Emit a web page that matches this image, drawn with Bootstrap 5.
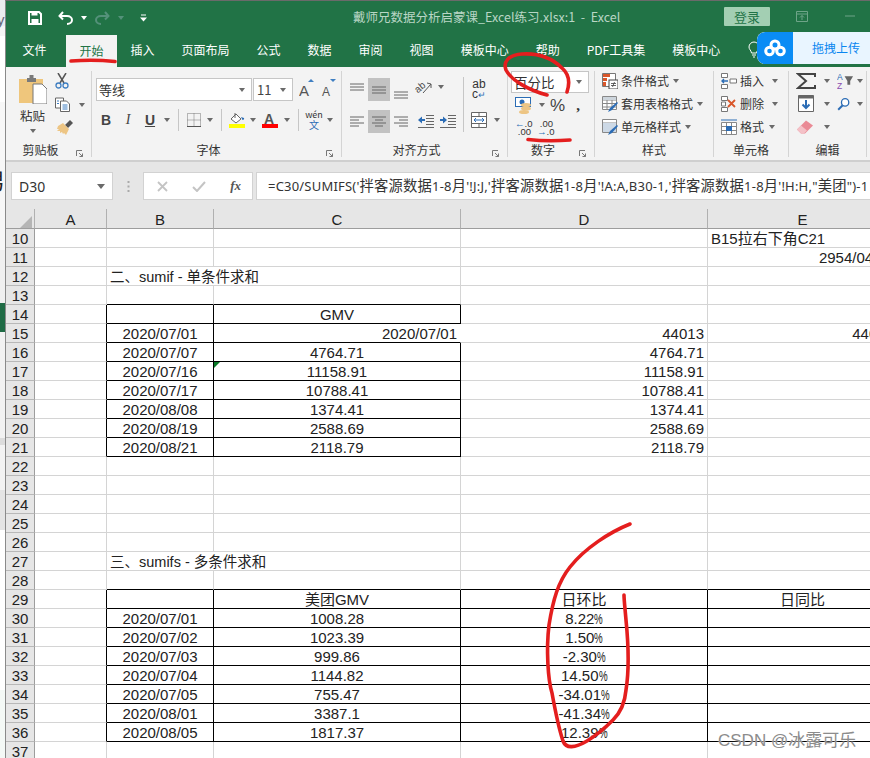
<!DOCTYPE html>
<html lang="zh-CN">
<head>
<meta charset="utf-8">
<title>Excel</title>
<link href="https://cdn.jsdelivr.net/npm/bootstrap@5.3.0/dist/css/bootstrap.min.css" rel="stylesheet">
<style>
html,body{margin:0;width:870px;height:758px;overflow:hidden;background:#fff}
body{font-family:"Noto Sans CJK SC","Noto Sans",sans-serif;font-size:12px;color:#333;position:relative}
.side-strip{width:5px;flex:none;overflow:hidden;background:linear-gradient(#eaecef 0 26px,#f5f5f5 26px 36px,#fff 36px 102px,#f7f7f7 102px 250px,#f0f0f0 250px 303px,#1f6b45 303px 332px,#f2f2f2 332px 438px,#dcdcdc 438px 445px,#f3f3f3 445px 490px,#e4e4e4 490px 530px,#fff 530px 690px,#f4f9f6 690px)}
.side-glyph{display:block;font:15px/16px "Liberation Sans",sans-serif;color:#667;margin:12px 0 0 -3px}
.side-glyph2{display:block;font:22px/30px "Noto Sans CJK SC",sans-serif;color:#222;margin:136px 0 0 -17px}
.xl-win{width:865px;flex:none;border-left:1px solid #8a8a8a;border-top:1px solid #6a6a6a;overflow:hidden}
.title-row{height:33px;background:#217346;color:#b9d6c5}
.qat{width:347px;padding-left:22px}
.win-title{width:371px;font-size:12.5px;white-space:pre}
.login-btn{width:46px;height:19px;background:#a3cfb3;color:#217346;font-size:13px;line-height:19px;border-radius:1px;margin-bottom:3px}
.win-ctl{margin-left:26px;margin-bottom:3px}
.win-ctl2{margin-left:37px;margin-bottom:3px}
.tab-row{height:33px;background:#217346;padding-left:3px}
.tab-row .nav-link{padding:0 13.5px;color:#fff;font-size:12px;line-height:32px;height:33px;border-radius:0}
.tab-row .nav-link.active{background:#f3f3f3;color:#217346;margin-top:1px;margin-left:6px;line-height:31px;height:32px}
.bulb{margin-left:14px;margin-top:7px}
.rib{height:93px;background:#f3f3f3;padding:4px 0 3px}
.rg{flex:none;height:86px;display:flex;flex-direction:column;border-right:1px solid #d4d4d4}
.rg1{width:86px}.rg2{width:250px}.rg3{width:166px}.rg4{width:87px}.rg5{width:119px}.rg6{width:75px}.rg7{width:78px}
.rg-body{flex:1 1 auto;min-height:0}
.rg-foot{height:14px;display:flex;flex:none;color:#333;line-height:14px}
.rg-foot>span:first-child{flex:1;text-align:center}
.launch{width:16px;display:flex;align-items:end;justify-content:start;padding-left:1px}
.ic{display:inline-flex;align-items:center;justify-content:center;flex:none}
.w12{width:12px}.w14{width:14px}.w20{width:20px}.w22{width:22px}.w23{width:23px}.w16{width:16px}
.tri{display:inline-block;width:0;height:0;border-left:3.5px solid transparent;border-right:3.5px solid transparent;border-top:4px solid #6a6a6a}
.vsep{width:1px;background:#c6c6c6;flex:none}
.paste-col{width:28px;margin-left:13px;padding-top:4px;text-align:center}
.paste-lab{display:block;font-size:12.5px;line-height:18px;margin:3px -4px 0 -5px}
.small-col{margin-left:8px;padding-top:2px}
.font-box{height:23px;background:#fff;border:1px solid #c6c6c6;display:flex;align-items:center;justify-content:space-between}
.fb-name{width:156px;padding:0 6px 0 2px;font-size:13px}
.fb-size{width:40px;margin-left:1px;padding:0 6px 0 3px;font-size:13px;color:#444}
.f-top{padding:7px 0 0 4px;height:35px}
.f-bot{padding:0 0 0 3px;height:28px}
.bi{font:bold 14px/1 "Liberation Sans",sans-serif;color:#444}
.it{font:italic 14px/1 "Liberation Serif",serif;color:#444}
.un{font:bold 14px/1 "Liberation Sans",sans-serif;color:#444;text-decoration:underline}
.sep-5{height:22px;margin:0 5px}
.wen{font-size:9px;line-height:10px;text-align:center;color:#333}
.wen b{display:block;font-weight:400;color:#2b6cb5;font-size:10px}
.on-gray{background:#c2c2c2;height:23px}
.al-left{width:121px;padding:7px 0 0 4px}
.al-r1{height:24px}
.al-r2{height:24px;margin-top:7px}
.al-sep{height:55px;margin:6px 0 0 0}
.al-right{padding:8px 0 0 7px}
.wrap-ic{width:16px;height:20px;font:12px/10px "Liberation Sans",sans-serif;color:#333;text-align:center;padding-top:0}
.num-sel{margin-left:3px;width:78px;height:22px;background:#fff;border:1px solid #c6c6c6;font-size:13.5px;padding:0 6px 0 2px}
.num-r{padding:2px 0 0 7px;height:22px}
.pct{font:17px/1 "Liberation Sans",sans-serif;color:#444}
.cma{font:bold 15px/1 "Liberation Serif",serif;color:#333}
.dec{font:9.5px/7.500px "Liberation Sans",sans-serif;color:#333;text-align:right;width:16px}
.dec i{font-style:normal;color:#2b6cb5;font-weight:700}
.rows-up{margin-top:-2px}
.sty-r{height:23px;padding-left:7px}
.sty-r svg{margin-right:3px;flex:none}
.sty-r .tri{margin-left:4px}
.sty-lab{line-height:23px;font-size:12px;white-space:nowrap}
.cell-r{padding-left:7px;height:23px}
.cell-r svg{margin-right:3px;flex:none}
.cell-r .tri{margin-left:5px}
.ed-a{width:27px;padding-left:6px}
.fbar{height:49px;background:#e6e6e6;border-top:2px solid #cfcfcf;padding-top:10px}
.nm-box{width:102px;height:28px;margin-left:5px;background:#fff;border:1px solid #d2d2d2;padding:0 7px;font:14px "Noto Sans",sans-serif;color:#333}
.dots{width:30px;height:28px;color:#aaa}
.fx-box{width:110px;height:28px;background:#fff;border:1px solid #d2d2d2;padding:0 11px 0 13px}
.fx-t{font:italic bold 13px "Liberation Serif",serif;color:#555}
.fm-box{flex:1 1 auto;height:28px;margin-left:3px;background:#fff;border:1px solid #d2d2d2;border-right:0;line-height:26px;padding-left:11px;font-family:"Noto Sans","Noto Sans CJK SC",sans-serif;font-size:13px;letter-spacing:.2px;white-space:nowrap;overflow:hidden;color:#333}
.fm-cj{font-size:14.300px}
.sheet-wrap{overflow:hidden;width:864px;height:549px}
table.sheet{table-layout:fixed;width:892px;border-collapse:separate;border-spacing:0;margin:0;font:15px/16px "Liberation Sans","Noto Sans CJK SC",sans-serif;color:#222}
.sheet td,.sheet th{height:19px;padding:2px 3px 0;border:0;border-right:1px solid #d4d4d4;border-bottom:1px solid #d4d4d4;white-space:nowrap;overflow:hidden;font-weight:400;background:#fff;box-shadow:none;vertical-align:bottom;color:#222}
.sheet thead th{height:20px;background:#e6e6e6;border-right:1px solid #b0b0b0;border-bottom:1px solid #9d9d9d;text-align:center;padding:2px 0 0}
.sheet tbody th{background:#e6e6e6;border-right:1px solid #9d9d9d;border-bottom:1px solid #b8b8b8;text-align:center;padding:2px 0 0}
.sheet td.ink{border-right-color:#000;border-bottom-color:#000}
.sheet td.ink-b{border-bottom-color:#000}
.sheet td.ink-r{border-right-color:#000}
.sheet td.no-r{border-right-color:#fff}
.sheet td.flagged{position:relative}
.sheet td.sec-title{font-size:14.500px}
.pc{display:inline-block;width:8.500px;transform:scaleX(.65);transform-origin:left center}
.err-mark{position:absolute;left:0;top:0;width:0;height:0;border-top:6px solid #0a7a28;border-right:6px solid transparent}
.baidu{position:absolute;left:757px;top:32px;width:113px;height:32px;background:#e9f5ff;border-radius:8px 0 0 8px;overflow:hidden;color:#0a86f0;font-size:12px}
.baidu-ic{width:36px;height:32px;background:#0a8cf5;border-radius:8px 0 0 8px;margin-right:19px}
.ink-layer{position:absolute;left:0;top:0;pointer-events:none}
.csdn{position:absolute;left:718px;top:730px;font:17px/22px "Liberation Sans","Noto Sans CJK SC",sans-serif;color:#8c8c8c;text-shadow:0 0 2px #fff;white-space:nowrap}
</style>
</head>
<body>
<div class="d-flex">
<div class="side-strip"><span class="side-glyph">y</span><span class="side-glyph2">男</span></div>
<div class="xl-win">

<div class="title-row d-flex align-items-center">
  <div class="qat d-flex align-items-center">
    <svg width="14" height="14" viewBox="0 0 14 14"><path d="M1 1h10l2 2v10H1z" fill="none" stroke="#fff" stroke-width="2"/><rect x="3.5" y="1" width="6" height="3.5" fill="#fff"/><rect x="3.5" y="8" width="7" height="5" fill="#fff"/></svg>
    <svg class="ms-3" width="15" height="14" viewBox="0 0 15 14"><path d="M5 1 1.500 5 5 8.500M2 5h7c3 0 5 1.800 5 4s-2 4-5 4" fill="none" stroke="#fff" stroke-width="2"/></svg>
    <span class="tri ms-2" style="border-top-color:#fff"></span>
    <svg class="ms-2" width="15" height="14" viewBox="0 0 15 14"><path d="M10 1l3.500 4L10 8.500M13 5H6c-3 0-5 1.800-5 4s2 4 5 4" fill="none" stroke="#54917a" stroke-width="2"/></svg>
    <span class="tri ms-2" style="border-top-color:#54917a"></span>
    <svg class="ms-3" width="7" height="8" viewBox="0 0 7 8"><path d="M1 1h5" stroke="#fff"/><path d="M0 3.500h7L3.500 7.500z" fill="#fff"/></svg>
  </div>
  <div class="win-title">戴师兄数据分析启蒙课_Excel练习.xlsx:1  -  Excel</div>
  <div class="login-btn text-center">登录</div>
  <svg class="win-ctl" width="12" height="11" viewBox="0 0 12 11"><path d="M.5.500h11v10H.500zM.5 3h11M4 6.500l2-2 2 2M6 4.500V9" fill="none" stroke="#6ea488"/></svg>
  <svg class="win-ctl2" width="10" height="2" viewBox="0 0 10 2"><path d="M0 1h10" stroke="#6ea488"/></svg>
</div>

<div class="tab-row d-flex">
  <ul class="nav flex-nowrap">
    <li class="nav-item"><a class="nav-link" href="#">文件</a></li>
    <li class="nav-item"><a class="nav-link active" href="#">开始</a></li>
    <li class="nav-item"><a class="nav-link" href="#">插入</a></li>
    <li class="nav-item"><a class="nav-link" href="#">页面布局</a></li>
    <li class="nav-item"><a class="nav-link" href="#">公式</a></li>
    <li class="nav-item"><a class="nav-link" href="#">数据</a></li>
    <li class="nav-item"><a class="nav-link" href="#">审阅</a></li>
    <li class="nav-item"><a class="nav-link" href="#">视图</a></li>
    <li class="nav-item"><a class="nav-link" href="#">模板中心</a></li>
    <li class="nav-item"><a class="nav-link" href="#">帮助</a></li>
    <li class="nav-item"><a class="nav-link" href="#">PDF工具集</a></li>
    <li class="nav-item"><a class="nav-link" href="#">模板中心</a></li>
  </ul>
  <svg class="bulb" width="12" height="17" viewBox="0 0 12 17"><path d="M3.500 12C3 9 1 8.500 1 6a5 5 0 0 1 10 0c0 2.500-2 3-2.500 6zM4 14h4M5 16h2" fill="none" stroke="#fff"/></svg>
</div>

<div class="rib d-flex">
  <!-- clipboard -->
  <div class="rg rg1">
    <div class="rg-body d-flex">
      <div class="paste-col">
        <svg class="d-block" width="28" height="29" viewBox="0 0 28 29"><path d="M0 4h24v24H0z" fill="#efc67c"/><path d="M8 3h2.500V0h4v3H17v4H8z" fill="#7a7a7a"/><path d="M14 9h9l5 5v15H14z" fill="#fff" stroke="#777"/></svg>
        <span class="paste-lab">粘贴</span>
        <span class="tri d-block mx-auto mt-1"></span>
      </div>
      <div class="small-col">
        <svg class="d-block" width="14" height="16" viewBox="0 0 14 16"><path d="M3 0l6 10M11 0 5 10" stroke="#555" stroke-width="1.500"/><circle cx="3.500" cy="12.500" r="2.500" fill="none" stroke="#3f7fc2" stroke-width="1.300"/><circle cx="10.500" cy="12.500" r="2.500" fill="none" stroke="#3f7fc2" stroke-width="1.300"/></svg>
        <div class="d-flex align-items-center" style="margin-top:8px">
          <svg width="16" height="15" viewBox="0 0 16 15"><path d="M.5 1h8v10h-8z" fill="#fff" stroke="#666"/><path d="M5.500 4h6l3 3v7.500h-9z" fill="#fff" stroke="#666"/><path d="M2 4h2M2 6.500h2M7.500 8h5M7.500 10h5M7.500 12h5" stroke="#3f7fc2"/></svg>
          <span class="tri ms-2"></span>
        </div>
        <svg class="d-block" style="margin-top:8px" width="18" height="15" viewBox="0 0 18 15"><path d="M10 5l5-5 3 3-5 5z" fill="#555"/><path d="M3 6l5-3 6 6-3 6-2-2-1 1-1-2-2 1 0-2-3 0 2-2-2 0z" fill="#edc584"/></svg>
      </div>
    </div>
    <div class="rg-foot"><span>剪贴板</span><span class="launch"><svg width="7" height="7" viewBox="0 0 7 7"><path d="M.5 6V.500H6M3 3l3.500 3.500M6.500 3.500v3h-3" fill="none" stroke="#777"/></svg></span></div>
  </div>

  <!-- font -->
  <div class="rg rg2">
    <div class="rg-body">
      <div class="f-top d-flex">
        <div class="font-box fb-name"><span>等线</span><span class="tri"></span></div>
        <div class="font-box fb-size"><span>11</span><span class="tri"></span></div>
        <svg style="margin-left:6px" width="15" height="20" viewBox="0 0 15 20"><text x="0" y="18" font-family="Liberation Sans" font-size="15" fill="#555">A</text><path d="M9 4l3-3 3 3z" fill="#3f7fc2"/></svg>
        <svg style="margin-left:7px" width="15" height="20" viewBox="0 0 15 20"><text x="1" y="18" font-family="Liberation Sans" font-size="12" fill="#555">A</text><path d="M9 1h6l-3 3z" fill="#3f7fc2"/></svg>
      </div>
      <div class="f-bot d-flex align-items-center">
        <span class="ic w22 bi">B</span><span class="ic w22 it">I</span><span class="ic w22 un">U</span><span class="ic w12"><span class="tri"></span></span>
        <span class="vsep sep-5"></span>
        <span class="ic w20"><svg width="14" height="14" viewBox="0 0 14 14"><path d="M.5.500h13v13H.500zM7 .5v13M.5 7h13" fill="none" stroke="#777" stroke-dasharray="1 1"/><path d="M0 13.500h14" stroke="#555"/></svg></span><span class="ic w12"><span class="tri"></span></span>
        <span class="vsep sep-5"></span>
        <span class="ic w20"><svg width="16" height="16" viewBox="0 0 16 16"><path d="M2 7l5-5 5 5-5 4z" fill="#fff" stroke="#666"/><path d="M6 1v5" stroke="#666"/><path d="M12 5l3 1c.5 1-.5 2-1.500 2z" fill="#2b6cb5"/><rect y="12" width="16" height="4" fill="#ffff00"/></svg></span><span class="ic w12"><span class="tri"></span></span>
        <span class="ic w22"><svg width="16" height="16" viewBox="0 0 16 16"><text x="2" y="12" font-family="Liberation Sans" font-weight="700" font-size="14" fill="#555">A</text><rect y="12" width="16" height="4" fill="#f00"/></svg></span><span class="ic w12"><span class="tri"></span></span>
        <span class="vsep sep-5"></span>
        <span class="ic w20 wen"><span>wén<b>文</b></span></span><span class="ic w12"><span class="tri"></span></span>
      </div>
    </div>
    <div class="rg-foot"><span>字体</span><span class="launch"><svg width="7" height="7" viewBox="0 0 7 7"><path d="M.5 6V.500H6M3 3l3.500 3.500M6.500 3.500v3h-3" fill="none" stroke="#777"/></svg></span></div>
  </div>

  <!-- alignment -->
  <div class="rg rg3">
    <div class="rg-body d-flex">
      <div class="al-left">
        <div class="al-r1 d-flex align-items-start">
          <span class="ic w22" style="height:17px"><svg width="14" height="8" viewBox="0 0 14 8"><path d="M0 1h14M0 4h14M0 7h14" stroke="#666" /></svg></span>
          <span class="ic w22 on-gray"><svg width="14" height="8" viewBox="0 0 14 8"><path d="M0 1h14M0 4h14M0 7h14" stroke="#666"/></svg></span>
          <span class="ic w22 on-gray" style="background:none;align-items:end;padding-bottom:2px"><svg width="14" height="8" viewBox="0 0 14 8"><path d="M0 1h14M0 4h14M0 7h14" stroke="#666"/></svg></span>
          <span class="ic w23"><svg width="18" height="17" viewBox="0 0 18 17"><text x="0" y="12" font-family="Liberation Sans" font-size="10" fill="#444" transform="rotate(-40 6 10)">ab</text><path d="M8 15 16 6M12 5l4 1 0 4" fill="none" stroke="#555"/></svg></span>
          <span class="ic w12" style="height:17px"><span class="tri"></span></span>
        </div>
        <div class="al-r2 d-flex align-items-center">
          <span class="ic w22"><svg width="14" height="11" viewBox="0 0 14 11"><path d="M0 1h14M0 4h9M0 7h14M0 10h9" stroke="#666"/></svg></span>
          <span class="ic w22 on-gray"><svg width="14" height="11" viewBox="0 0 14 11"><path d="M0 1h14M3 4h8M0 7h14M3 10h8" stroke="#666"/></svg></span>
          <span class="ic w22"><svg width="14" height="11" viewBox="0 0 14 11"><path d="M0 1h14M5 4h9M0 7h14M5 10h9" stroke="#666"/></svg></span>
          <span class="ic w22" style="margin-left:3px"><svg width="16" height="13" viewBox="0 0 16 13"><path d="M8 .5h8M8 3.500h8M8 6.500h8M8 9.500h8M0 12.500h16" stroke="#666"/><path d="M0 5l4-3.500V4h3v2H4v2.500z" fill="#2b6cb5"/></svg></span>
          <span class="ic w22"><svg width="16" height="13" viewBox="0 0 16 13"><path d="M8 .5h8M8 3.500h8M8 6.500h8M8 9.500h8M0 12.500h16" stroke="#666"/><path d="M7 5 3 1.500V4H0v2h3v2.500z" fill="#2b6cb5"/></svg></span>
        </div>
      </div>
      <span class="vsep al-sep"></span>
      <div class="al-right">
        <div class="wrap-ic">ab<br>c<span style="color:#2b6cb5;font-size:9px">↵</span></div>
        <div class="d-flex align-items-center" style="margin-top:13px">
          <svg width="16" height="16" viewBox="0 0 16 16"><path d="M.5.500h15v15H.500zM.5 4.500h15M.5 11.500h15M8 .5v4M8 11.500v4" fill="#fff" stroke="#666"/><path d="M3 8h10M5 6 3 8l2 2M11 6l2 2-2 2" fill="none" stroke="#2b6cb5"/></svg>
          <span class="ic w12 ms-1"><span class="tri"></span></span>
        </div>
      </div>
    </div>
    <div class="rg-foot"><span>对齐方式</span><span class="launch"><svg width="7" height="7" viewBox="0 0 7 7"><path d="M.5 6V.500H6M3 3l3.500 3.500M6.500 3.500v3h-3" fill="none" stroke="#777"/></svg></span></div>
  </div>

  <!-- number -->
  <div class="rg rg4">
    <div class="rg-body">
      <div class="num-sel d-flex align-items-center justify-content-between"><span>百分比</span><span class="tri"></span></div>
      <div class="num-r d-flex align-items-center">
        <svg width="17" height="17" viewBox="0 0 17 17"><rect x=".5" y=".5" width="15" height="9" fill="#fff" stroke="#2b6cb5"/><circle cx="7" cy="5" r="2.500" fill="#2b6cb5"/><ellipse cx="11" cy="8" rx="5" ry="2" fill="#edc584"/><ellipse cx="11" cy="11.500" rx="5" ry="2" fill="#edc584"/><ellipse cx="9" cy="15" rx="5" ry="2" fill="#edc584"/></svg>
        <span class="ic w12 ms-1"><span class="tri"></span></span>
        <span class="pct" style="margin-left:2px">%</span>
        <span class="cma" style="margin-left:11px">,</span>
      </div>
      <div class="d-flex" style="padding:5px 0 0 7px">
        <span class="dec"><i>←</i>.0<br>.00</span>
        <span class="dec" style="margin-left:6px">.00<br><i>→</i>.0</span>
      </div>
    </div>
    <div class="rg-foot"><span>数字</span><span class="launch"><svg width="7" height="7" viewBox="0 0 7 7"><path d="M.5 6V.500H6M3 3l3.500 3.500M6.500 3.500v3h-3" fill="none" stroke="#777"/></svg></span></div>
  </div>

  <!-- styles -->
  <div class="rg rg5">
    <div class="rg-body rows-up">
      <div class="sty-r d-flex align-items-center">
        <svg width="16" height="16" viewBox="0 0 16 16"><path d="M.5.500h13v13H.500z" fill="#fff" stroke="#777"/><path d="M1 1h7v3H1zM1 5h4v3H1zM1 9h3v4H1z" fill="#d9572b"/><rect x="7" y="7" width="9" height="9" fill="#fff" stroke="#444"/><path d="M9 10.500h5M9 12.500h5M12.500 9l-2 5" stroke="#444" stroke-width=".8"/></svg>
        <span class="sty-lab">条件格式</span><span class="tri"></span>
      </div>
      <div class="sty-r d-flex align-items-center">
        <svg width="16" height="16" viewBox="0 0 16 16"><path d="M.5.500h14v13H.500zM.5 4h14M.5 7.500h14M.5 11h14M5 .5v13M10 .5v13" fill="#fff" stroke="#888"/><path d="M1 1h13v3H1z" fill="#cdd5dc"/><path d="M6 16l2-4 7-6 1 1-6 7z" fill="#2b6cb5"/></svg>
        <span class="sty-lab">套用表格格式</span><span class="tri"></span>
      </div>
      <div class="sty-r d-flex align-items-center">
        <svg width="16" height="16" viewBox="0 0 16 16"><path d="M.5.500h14v13H.500zM.5 4h14" fill="#fff" stroke="#888"/><path d="M1 4h13v9H1z" fill="#cdd9e6"/><path d="M6 16l2-4 7-6 1 1-6 7z" fill="#2b6cb5"/></svg>
        <span class="sty-lab">单元格样式</span><span class="tri"></span>
      </div>
    </div>
    <div class="rg-foot"><span>样式</span></div>
  </div>

  <!-- cells -->
  <div class="rg rg6">
    <div class="rg-body rows-up">
      <div class="cell-r d-flex align-items-center">
        <svg width="16" height="16" viewBox="0 0 16 16"><path d="M.5.500h6v4h-6zM.5 11.500h6v4h-6zM9 6h6.500v4H9z" fill="#fff" stroke="#777"/><path d="M1 8h6M3 6 1 8l2 2" fill="none" stroke="#2b6cb5" stroke-width="1.400"/></svg>
        <span class="sty-lab">插入</span><span class="tri" style="margin-left:8px"></span>
      </div>
      <div class="cell-r d-flex align-items-center">
        <svg width="16" height="16" viewBox="0 0 16 16"><path d="M.5.500h6v4h-6zM.5 11.500h6v4h-6zM.5 6h4v4h-4z" fill="#fff" stroke="#777"/><path d="M7 4l7 7M14 4l-7 7" stroke="#d9572b" stroke-width="1.800"/></svg>
        <span class="sty-lab">删除</span><span class="tri" style="margin-left:8px"></span>
      </div>
      <div class="cell-r d-flex align-items-center">
        <svg width="16" height="16" viewBox="0 0 16 16"><path d="M.5 3.500h15v12H.500zM.5 7.500h15M.5 11.500h15M5.500 3.500v12M10.500 3.500v12" fill="#fff" stroke="#888"/><path d="M0 1h16" stroke="#2b6cb5"/><rect x="5" y="7" width="6" height="5" fill="#2b6cb5"/></svg>
        <span class="sty-lab">格式</span><span class="tri"></span>
      </div>
    </div>
    <div class="rg-foot"><span>单元格</span></div>
  </div>

  <!-- editing -->
  <div class="rg rg7">
    <div class="rg-body rows-up">
      <div class="d-flex align-items-center" style="height:23px">
        <span class="ed-a ic"><svg width="20" height="16" viewBox="0 0 20 16"><path d="M19 4V1H2l8 7-8 7h17v-3" fill="none" stroke="#444" stroke-width="2"/></svg></span>
        <span class="ic w14 ms-1"><span class="tri"></span></span>
        <svg style="margin-left:3px" width="18" height="17" viewBox="0 0 18 17"><text x="0" y="8" font-family="Liberation Sans" font-size="9" fill="#2b6cb5">A</text><text x="0" y="17" font-family="Liberation Sans" font-size="9" fill="#8a4fb0">Z</text><path d="M8 4h9l-3 5v4h-3V9z" fill="#666"/></svg>
        <span class="ic w12"><span class="tri"></span></span>
      </div>
      <div class="d-flex align-items-center" style="height:23px">
        <span class="ed-a ic"><svg width="16" height="17" viewBox="0 0 16 17"><path d="M.5.500h15v16H.500z" fill="#fff" stroke="#666"/><path d="M.5.500h15v3H.500z" fill="#666"/><path d="M8 5v8M4.500 9.500 8 13l3.500-3.500" fill="none" stroke="#2b6cb5" stroke-width="2"/></svg></span>
        <span class="ic w14 ms-1"><span class="tri"></span></span>
        <svg style="margin-left:3px" width="16" height="16" viewBox="0 0 16 16"><circle cx="10" cy="6" r="4.500" fill="#fff" stroke="#2b6cb5" stroke-width="1.600"/><path d="M7 9.500 1.500 15" stroke="#2b6cb5" stroke-width="2.400"/></svg>
        <span class="ic w12 ms-1"><span class="tri"></span></span>
      </div>
      <div class="d-flex align-items-center" style="height:23px">
        <span class="ed-a ic"><svg width="20" height="14" viewBox="0 0 20 14"><path d="M10 .5l7 5-8 8H5l-4-4z" fill="#ea8a95"/><path d="M1 9.500l4-4 6 5-3 3H5z" fill="#f4c1c7"/></svg></span>
        <span class="ic w14 ms-1"><span class="tri"></span></span>
      </div>
    </div>
    <div class="rg-foot"><span>编辑</span></div>
  </div>
</div>

<div class="fbar d-flex align-items-start">
  <div class="nm-box d-flex align-items-center justify-content-between"><span>D30</span><span class="tri" style="border-left-width:4px;border-right-width:4px;border-top-width:5px"></span></div>
  <div class="dots d-flex align-items-center justify-content-center"><svg width="3" height="11" viewBox="0 0 3 11"><path d="M1.500 0v2M1.500 4.500v2M1.500 9v2" stroke="#aaa" stroke-width="2"/></svg></div>
  <div class="fx-box d-flex align-items-center justify-content-between">
    <svg width="11" height="11" viewBox="0 0 11 11"><path d="M1 1l9 9M10 1l-9 9" stroke="#c4c4c4" stroke-width="1.800"/></svg>
    <svg width="14" height="11" viewBox="0 0 14 11"><path d="M1 6l4 4 8-9" fill="none" stroke="#c4c4c4" stroke-width="2"/></svg>
    <span class="fx-t">fx</span>
  </div>
  <div class="fm-box">=C30/SUMIFS('<span class="fm-cj">拌客源数据</span>1-8<span class="fm-cj">月</span>'!J:J,'<span class="fm-cj">拌客源数据</span>1-8<span class="fm-cj">月</span>'!A:A,B30-1,'<span class="fm-cj">拌客源数据</span>1-8<span class="fm-cj">月</span>'!H:H,"<span class="fm-cj">美团</span>")-1</div>
</div>

<div class="sheet-wrap">
<table class="table sheet">
<colgroup><col style="width:29px"><col style="width:72px"><col style="width:107px"><col style="width:247px"><col style="width:247px"><col style="width:190px"></colgroup>
<thead><tr><th><svg class="d-block ms-auto" style="margin:1px 2px 0 0" width="12" height="12" viewBox="0 0 12 12"><path d="M12 0v12H0z" fill="#b5b5b5"/></svg></th><th>A</th><th>B</th><th>C</th><th>D</th><th>E</th></tr></thead>
<tbody>
<tr><th>10</th><td></td><td></td><td></td><td></td><td>B15拉右下角C21</td></tr>
<tr><th>11</th><td></td><td></td><td></td><td></td><td class="text-end">2954/04/24</td></tr>
<tr><th>12</th><td></td><td class="sec-title" colspan="2">二、sumif - 单条件求和</td><td></td><td></td></tr>
<tr><th>13</th><td></td><td class="ink-b"></td><td class="ink-b"></td><td></td><td></td></tr>
<tr><th>14</th><td class="ink-r"></td><td class="ink"></td><td class="ink text-center">GMV</td><td></td><td></td></tr>
<tr><th>15</th><td class="ink-r"></td><td class="ink text-center">2020/07/01</td><td class="ink-b no-r text-end">2020/07/01</td><td class="text-end">44013</td><td class="text-end">44013</td></tr>
<tr><th>16</th><td class="ink-r"></td><td class="ink text-center">2020/07/07</td><td class="ink text-center">4764.71</td><td class="text-end">4764.71</td><td></td></tr>
<tr><th>17</th><td class="ink-r"></td><td class="ink text-center">2020/07/16</td><td class="ink text-center flagged"><span class="err-mark"></span>11158.91</td><td class="text-end">11158.91</td><td></td></tr>
<tr><th>18</th><td class="ink-r"></td><td class="ink text-center">2020/07/17</td><td class="ink text-center">10788.41</td><td class="text-end">10788.41</td><td></td></tr>
<tr><th>19</th><td class="ink-r"></td><td class="ink text-center">2020/08/08</td><td class="ink text-center">1374.41</td><td class="text-end">1374.41</td><td></td></tr>
<tr><th>20</th><td class="ink-r"></td><td class="ink text-center">2020/08/19</td><td class="ink text-center">2588.69</td><td class="text-end">2588.69</td><td></td></tr>
<tr><th>21</th><td class="ink-r"></td><td class="ink text-center">2020/08/21</td><td class="ink text-center">2118.79</td><td class="text-end">2118.79</td><td></td></tr>
<tr><th>22</th><td></td><td></td><td></td><td></td><td></td></tr>
<tr><th>23</th><td></td><td></td><td></td><td></td><td></td></tr>
<tr><th>24</th><td></td><td></td><td></td><td></td><td></td></tr>
<tr><th>25</th><td></td><td></td><td></td><td></td><td></td></tr>
<tr><th>26</th><td></td><td></td><td></td><td></td><td></td></tr>
<tr><th>27</th><td></td><td class="sec-title" colspan="2">三、sumifs - 多条件求和</td><td></td><td></td></tr>
<tr><th>28</th><td></td><td class="ink-b"></td><td class="ink-b"></td><td class="ink-b"></td><td class="ink-b"></td></tr>
<tr><th>29</th><td class="ink-r"></td><td class="ink"></td><td class="ink text-center">美团GMV</td><td class="ink text-center">日环比</td><td class="ink text-center">日同比</td></tr>
<tr><th>30</th><td class="ink-r"></td><td class="ink text-center">2020/07/01</td><td class="ink text-center">1008.28</td><td class="ink text-center">8.22<span class="pc">%</span></td><td class="ink"></td></tr>
<tr><th>31</th><td class="ink-r"></td><td class="ink text-center">2020/07/02</td><td class="ink text-center">1023.39</td><td class="ink text-center">1.50<span class="pc">%</span></td><td class="ink"></td></tr>
<tr><th>32</th><td class="ink-r"></td><td class="ink text-center">2020/07/03</td><td class="ink text-center">999.86</td><td class="ink text-center">-2.30<span class="pc">%</span></td><td class="ink"></td></tr>
<tr><th>33</th><td class="ink-r"></td><td class="ink text-center">2020/07/04</td><td class="ink text-center">1144.82</td><td class="ink text-center">14.50<span class="pc">%</span></td><td class="ink"></td></tr>
<tr><th>34</th><td class="ink-r"></td><td class="ink text-center">2020/07/05</td><td class="ink text-center">755.47</td><td class="ink text-center">-34.01<span class="pc">%</span></td><td class="ink"></td></tr>
<tr><th>35</th><td class="ink-r"></td><td class="ink text-center">2020/08/01</td><td class="ink text-center">3387.1</td><td class="ink text-center">-41.34<span class="pc">%</span></td><td class="ink"></td></tr>
<tr><th>36</th><td class="ink-r"></td><td class="ink text-center">2020/08/05</td><td class="ink text-center">1817.37</td><td class="ink text-center">12.39<span class="pc">%</span></td><td class="ink"></td></tr>
<tr><th>37</th><td></td><td></td><td></td><td></td><td></td></tr>
</tbody>
</table>
</div>
</div>
</div>

<div class="baidu d-flex align-items-center">
  <div class="baidu-ic d-flex align-items-center justify-content-center">
    <svg width="22" height="18" viewBox="0 0 22 18"><g fill="none" stroke="#fff" stroke-width="3"><circle cx="11" cy="6" r="4"/><circle cx="5.500" cy="12" r="3.800"/><circle cx="16.500" cy="12" r="3.800"/></g></svg>
  </div>
  <span>拖拽上传</span>
</div>

<svg class="ink-layer" width="870" height="758" viewBox="0 0 870 758">
  <g fill="none" stroke="#e41e1e" stroke-width="3.600" stroke-linecap="round" stroke-linejoin="round">
    <path d="M71 61C85 60 100 60 115 61.500"/>
    <path d="M567 92C570 83 570 75 562 68 552 58 538 53 522 54 508 55 503 62 506 70 511 80 528 90 547 95"/>
    <path d="M528 139.500C542 141 556 141 570 140"/>
    <path d="M630 524C610 532 585 548 570 567 558 582 553 600 549 625 546 650 548 680 552 693 556 715 560 732 563 741 566 749 575 748 587 741 597 735 606 727 613 720 621 712 625 702 626 690 630 665 628 640 626 620 625 608 624 600 624 595"/>
  </g>
</svg>
<div class="csdn">CSDN @冰露可乐</div>
</body>
</html>
